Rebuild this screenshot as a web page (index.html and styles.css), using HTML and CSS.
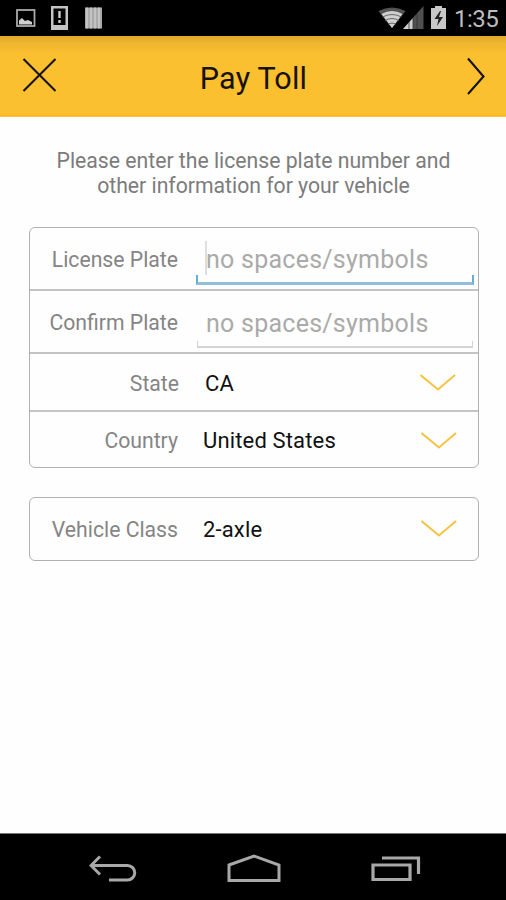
FILE: index.html
```html
<!DOCTYPE html>
<html lang="en">
<head>
<meta charset="utf-8">
<title>Pay Toll</title>
<link rel="stylesheet" href="styles.css">
</head>
<body>
<div class="statusbar">
  <svg width="110" height="36" viewBox="0 0 110 36">
    <rect x="17" y="10" width="17.500" height="16" fill="none" stroke="#aaa" stroke-width="1.800"/>
    <path d="M19 24.500v-4l3-2.500 3 3 3-1 4 2v2.500z" fill="#d0d0d0"/>
    <path d="M51 6h17v24H51zM53.500 8.500V25h12V8.500z" fill="#c4c4c4" fill-rule="evenodd"/>
    <path d="M59.500 11v7m0 2v3" stroke="#ccc" stroke-width="2.400"/>
    <path d="M85 7.500h17v21H85z" fill="#aaa"/>
    <path d="M87 7.500v21m4-21v21m4-21v21m4-21v21" stroke="#ccc" stroke-width="1.500"/>
  </svg>
  <div class="status-right">
    <svg width="72" height="36" viewBox="0 0 72 36">
      <path d="M.5 11q13.500-7 27 0L14 28z" fill="#555"/>
      <path d="M3.500 14q10.500-6 21 0L14 28z" fill="#d0d0d0"/>
      <path d="M4.500 17q9.500-5 19 0M7 20.500q7-4 14 0M10 24q4-2 8 0" fill="none" stroke="#666" stroke-width="1"/>
      <path d="M25 29L45.500 6v23z" fill="#505050"/>
      <path d="M25 29l10-11v11z" fill="#d0d0d0"/>
      <path d="M31 22v7m4-11v11m4-15v15" stroke="#333" stroke-width=".8"/>
      <path d="M53 8h4V6h7v2h4v21H53z" fill="#c8c8c8"/>
      <path d="M62 11l-5.500 8h4l-1.500 7 6-9h-4l2-6z" fill="#222"/>
    </svg>
    <span class="clock">1:35</span>
  </div>
</div>
<header class="header">
  <svg width="60" height="80" viewBox="0 0 60 80"><path d="M23.500 23l32 32M55.500 23l-32 32" stroke="#171204" stroke-width="2.100"/></svg>
  <h1 class="title">Pay Toll</h1>
  <svg width="60" height="80" viewBox="0 0 60 80"><path d="M22 22.500L37.500 40.500 22 58" fill="none" stroke="#171204" stroke-width="2.100"/></svg>
</header>
<main class="content">
  <p class="intro">Please enter the license plate number and<br>other information for your vehicle</p>
  <section class="card">
    <div class="row row-plate">
      <span class="label">License Plate</span>
      <div class="field focused"><span class="hint">no spaces/symbols</span></div>
    </div>
    <div class="row row-confirm">
      <span class="label">Confirm Plate</span>
      <div class="field"><span class="hint">no spaces/symbols</span></div>
    </div>
    <div class="row row-state">
      <span class="label label-state">State</span>
      <span class="value value-state">CA</span>
      <svg class="chevron chevron-state" width="36" height="18" viewBox="0 0 36 18"><path d="M.5 1L18 15.500 35 1"/></svg>
    </div>
    <div class="row row-country">
      <span class="label">Country</span>
      <span class="value">United States</span>
      <svg class="chevron" width="36" height="18" viewBox="0 0 36 18"><path d="M.5 1L18 15.500 35 1"/></svg>
    </div>
  </section>
  <section class="card">
    <div class="row row-class">
      <span class="label">Vehicle Class</span>
      <span class="value">2-axle</span>
      <svg class="chevron" width="36" height="18" viewBox="0 0 36 18"><path d="M.5 1L18 15.500 35 1"/></svg>
    </div>
  </section>
</main>
<nav class="navbar">
  <svg width="48" height="30" viewBox="0 0 48 30"><path d="M2 11.500h36.500a7 7 0 0 1 0 14.500H20M11 2.500L2 11.500l9 9" fill="none" stroke="#a8a8a8" stroke-width="3"/></svg>
  <svg width="54" height="30" viewBox="0 0 54 30"><path d="M2 11L27 2l25 9v15.500H2z" fill="none" stroke="#a8a8a8" stroke-width="3"/></svg>
  <svg width="50" height="30" viewBox="0 0 50 30"><path d="M2 11h37v14.500H2zM11 4h36.500v16" fill="none" stroke="#a8a8a8" stroke-width="3.200"/></svg>
</nav>
</body>
</html>
```
FILE: styles.css
```css
* { box-sizing: border-box; }
body {
  margin: 0;
  width: 506px;
  height: 900px;
  display: flex;
  flex-direction: column;
  background: #fefefe;
  font-family: Roboto, "Liberation Sans", sans-serif;
  overflow: hidden;
}
svg { display: block; flex: none; }
.statusbar {
  height: 36px;
  flex: none;
  background: #000;
  display: flex;
  justify-content: space-between;
}
.status-right { display: flex; padding-right: 8px; gap: 4px; }
.clock { width: 44px; font-size: 24px; line-height: 38px; color: #bdbdbd; white-space: nowrap; letter-spacing: -.5px; }
.header {
  height: 81px;
  flex: none;
  display: flex;
  justify-content: space-between;
  background: linear-gradient(#dfa92c 0, #eeb52f 7px, #fac030 17px, #fac030 78px, #f9b81c 79px, #fbc548 81px);
}
.title { margin: 0; padding-left: 1px; font-size: 30.500px; font-weight: 400; line-height: 85px; color: #171204; letter-spacing: .2px; }
.content { flex: 1; padding: 31px 28px 0 29px; }
.intro {
  margin: 0 0 29px;
  height: 50px;
  text-align: center;
  font-size: 21.200px;
  line-height: 25px;
  color: #7c7c7c;
  white-space: nowrap;
}
.card {
  border: 1px solid #b0b0b0;
  border-radius: 6px;
  width: 450px;
  margin-top: 29px;
}
.row { display: flex; align-items: center; border-bottom: 2px solid #c4c4c4; }
.row:last-child { border-bottom: 0; }
.row-plate { height: 63px; }
.row-confirm { height: 63px; }
.row-state { height: 58px; }
.row-country { height: 55px; }
.row-class { height: 62px; }
.label {
  width: 148px;
  flex: none;
  text-align: right;
  font-size: 21.200px;
  color: #858585;
  white-space: nowrap;
}
.row-plate .label, .row-confirm .label { padding-top: 2px; }
.row-state, .row-country { padding-top: 2px; }
.label-state { width: 149px; }
.value { flex: 1; margin-left: 25px; font-size: 22px; color: #111; white-space: nowrap; letter-spacing: .15px; }
.value-state { margin-left: 26px; }
.chevron { margin-right: 21px; }
.chevron-state { margin-right: 22px; }
.chevron path { fill: none; stroke: #f8c243; stroke-width: 2; }
.field {
  position: relative;
  width: 278px;
  height: 45px;
  margin-left: 18px;
  padding-left: 10px;
  align-self: flex-end;
  margin-bottom: 4px;
  line-height: 42px;
  font-size: 25px;
  letter-spacing: .25px;
  color: #aaa;
  white-space: nowrap;
}
.focused { line-height: 40px; }
.field::after {
  content: "";
  position: absolute;
  left: 1px;
  right: 1px;
  bottom: 0;
  height: 5px;
  border: 1.500px solid #d4d4d4;
  border-bottom-width: 2px;
  border-top: 0;
}
.focused::after { left: 0; right: 0; height: 7px; border: 2px solid #67acd5; border-top: 0; border-bottom: 3px solid #91bddb; }
.focused::before {
  content: "";
  position: absolute;
  left: 9px;
  top: 1px;
  width: 2px;
  height: 34px;
  background: #dedede;
}
.navbar {
  height: 67px;
  flex: none;
  background: #000;
  border-top: 1px solid #777;
  display: flex;
  justify-content: space-between;
  align-items: center;
  padding: 4px 85px 0 89px;
}
```
